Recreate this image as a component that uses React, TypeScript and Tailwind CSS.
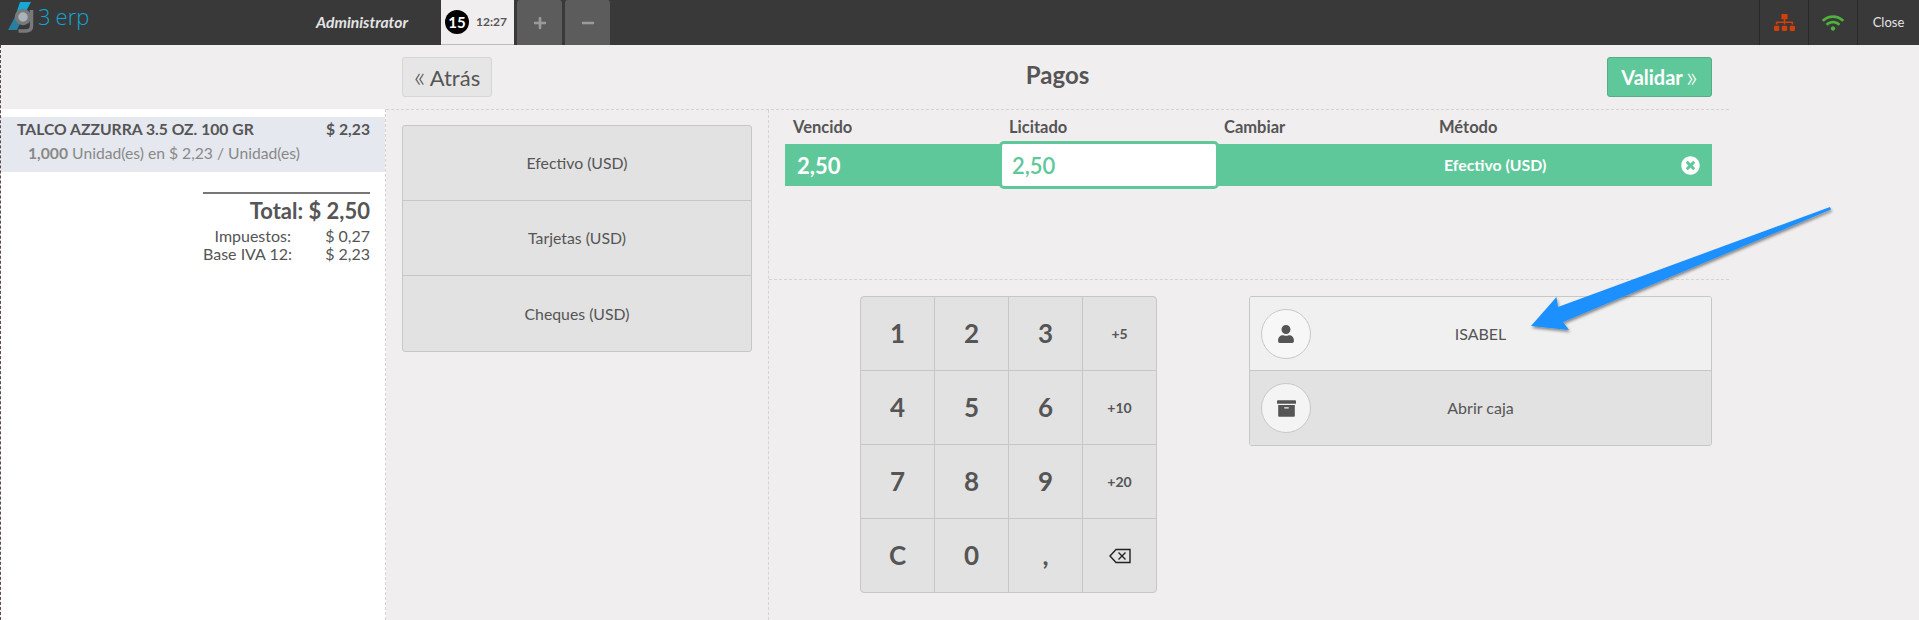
import { FaArchive, FaMinus, FaPlus, FaSitemap, FaTimesCircle, FaUser, FaWifi } from 'react-icons/fa'

const keys = ['1', '2', '3', '+5', '4', '5', '6', '+10', '7', '8', '9', '+20', 'C', '0', ',', 'back']
const methods = ['Efectivo (USD)', 'Tarjetas (USD)', 'Cheques (USD)']

function Logo() {
  return (
    <div className="flex h-[45px] w-[94px] items-start pl-[8px] pt-[1px]">
      <svg width="30" height="32" viewBox="0 0 30 32" className="shrink-0">
        <polygon points="0,29 7,16 15,16 9,29" fill="#2b7f9e" />
        <polygon points="12,1 23,1 15,16 7,16" fill="#14a9d8" />
        <circle cx="15" cy="16" r="6.5" fill="#a9b4ba" stroke="#77797b" strokeWidth="3.5" />
        <path d="M23.5 9v16c0 4-3 5-6 5h-7" fill="none" stroke="#77797b" strokeWidth="3.5" />
      </svg>
      <span className="mt-[3px] whitespace-nowrap font-['Open_Sans',sans-serif] text-[22px] leading-[24px] font-light text-[#12a5d5]">3<span className="ml-[5px]">erp</span></span>
    </div>
  )
}

function App() {
  return (
    <div className="relative flex h-[620px] w-[1919px] flex-col overflow-hidden bg-[#f0eeef] font-['Lato','Noto_Sans',sans-serif] text-[#555555]">
      {/* Top bar */}
      <header className="flex h-[45px] shrink-0 items-stretch bg-[#393939]">
        <Logo />
        <div className="ml-[222px] flex w-[125px] items-center text-[15.7px] font-bold italic text-[#e4e4e4]">Administrator</div>
        <div className="flex w-[73px] items-center gap-[7px] border-b border-[#bdbdbd] bg-[#f0eeef] pl-[4px]">
          <span className="flex h-[24px] w-[24px] items-center justify-center rounded-full bg-black text-[15px] font-bold text-white">15</span>
          <span className="text-[12px] font-bold text-[#555555]">12:27</span>
        </div>
        <div className="ml-[3px] flex w-[45px] items-center justify-center rounded-t-[3px] bg-[#5c5c5c] text-[#9a9a9a]"><FaPlus className="h-[14px] w-[14px]" /></div>
        <div className="ml-[3px] flex w-[45px] items-center justify-center rounded-t-[3px] bg-[#5c5c5c] text-[#9a9a9a]"><FaMinus className="h-[14px] w-[14px]" /></div>
        <div className="ml-auto flex items-stretch">
          <div className="flex w-[49px] items-center justify-center border-l border-[#292929]"><FaSitemap className="h-[21px] w-[21px] text-[#d23f0a]" /></div>
          <div className="flex w-[49px] items-center justify-center border-l border-[#292929]"><FaWifi className="h-[22px] w-[22px] text-[#4eb23c]" /></div>
          <div className="flex w-[62px] items-center justify-center border-l border-[#292929] text-[13px] text-[#e4e4e4]">Close</div>
        </div>
      </header>

      <div className="flex min-h-0 flex-1 border-l border-dashed border-l-[#5a4a4a]">
        {/* Order column */}
        <aside className="flex w-[385px] shrink-0 flex-col">
          <div className="h-[64px] shrink-0" />
          <div className="flex-1 border-r border-dashed border-[#d4d4d4] bg-white pt-[8px]">
            <div className="h-[55px] bg-[#e6e8ef] pt-[2px] pl-[16px] pr-[15px] text-[15.7px] leading-[20px]">
              <div className="flex justify-between font-bold"><span>TALCO AZZURRA 3.5 OZ. 100 GR</span><span>$ 2,23</span></div>
              <div className="mt-[4px] pl-[11px] text-[#888888]"><b>1,000</b> Unidad(es) en $ 2,23 / Unidad(es)</div>
            </div>
            <div className="mt-[20px] ml-[202px] mr-[15px] border-t-2 border-[#777777] pt-[1px] text-right">
              <div className="text-[22px] leading-[32px] font-bold">Total: $ 2,50</div>
              <div className="flex text-[16px] leading-[18px]"><span className="w-[88px] whitespace-nowrap">Impuestos:</span><span className="flex-1">$ 0,27</span></div>
              <div className="flex text-[16px] leading-[18px]"><span className="w-[88px] whitespace-nowrap">Base IVA 12:</span><span className="flex-1">$ 2,23</span></div>
            </div>
          </div>
        </aside>

        <div className="flex w-[1343px] shrink-0 flex-col">
          {/* Title row */}
          <div className="flex h-[65px] shrink-0 items-start border-b border-dashed border-[#d4d4d4] pt-[12px] pl-[16px] pr-[17px]">
            <button className="flex h-[40px] w-[90px] items-center justify-center gap-[4px] rounded-[3px] border border-[#d6d6d6] bg-[#e6e6e6] text-[22px]"><span className="-mt-[4px] text-[30px] leading-none font-light">«</span>Atrás</button>
            <h1 className="flex-1 pt-[4px] pl-[16px] text-center text-[24px] leading-[28px] font-bold">Pagos</h1>
            <button className="flex h-[40px] w-[105px] items-center justify-center gap-[3px] rounded-[3px] border border-[#54ad87] bg-[#5fc89b] text-[20px] font-bold text-white">Validar<span className="-mt-[4px] text-[30px] leading-none font-light">»</span></button>
          </div>

          <div className="flex min-h-0 flex-1">
            {/* Payment methods */}
            <div className="w-[383px] shrink-0 border-r border-dashed border-[#d4d4d4] pt-[15px] pl-[16px]">
              <div className="w-[350px] divide-y divide-[#c7c7c7] overflow-hidden rounded-[3px] border border-[#c7c7c7] bg-[#e2e2e2]">
                {methods.map((m) => (
                  <div key={m} className="flex h-[75px] items-center justify-center text-[15.8px]">{m}</div>
                ))}
              </div>
            </div>

            <div className="flex flex-1 flex-col">
              {/* Paymentlines */}
              <div className="h-[170px] shrink-0 border-b border-dashed border-[#d4d4d4] pl-[16px]">
                <div className="flex h-[34px] items-center pl-[8px] text-[16.5px] font-bold">
                  <span className="w-[216px]">Vencido</span>
                  <span className="w-[215px]">Licitado</span>
                  <span className="w-[215px]">Cambiar</span>
                  <span>Método</span>
                </div>
                <div className="flex h-[42px] w-[927px] items-center bg-[#5fc89b] font-bold text-white">
                  <span className="w-[214px] pl-[12px] text-[22px]">2,50</span>
                  <div className="flex h-[48px] w-[220px] shrink-0 items-center rounded-[5px] border-[3px] border-[#5fc89b] bg-white pl-[10px] text-[22px] font-semibold text-[#5fc89b]">2,50</div>
                  <span className="w-[225px]" />
                  <span className="text-[15.8px]">Efectivo (USD)</span>
                  <FaTimesCircle className="ml-auto mr-[12px] h-[19px] w-[19px]" />
                </div>
              </div>

              <div className="flex flex-1 items-start pt-[16px]">
                {/* Numpad */}
                <div className="ml-[91px] grid w-[297px] grid-cols-[74px_74px_74px_73px] overflow-hidden rounded-[4px] border border-[#c7c7c7] bg-[#e2e2e2]">
                  {keys.map((k, i) => (
                    <div
                      key={k}
                      className={`flex items-center justify-center font-bold ${i % 4 !== 3 ? 'border-r border-[#c7c7c7]' : ''} ${i < 12 ? 'h-[74px] border-b border-[#c7c7c7]' : 'h-[73px]'} ${k.startsWith('+') ? 'text-[14px]' : 'text-[26px]'}`}
                    >
                      {k === 'back' ? (
                        <svg width="22" height="16" viewBox="0 0 22 16" fill="none" stroke="#222222" strokeWidth="1.4">
                          <path d="M7 1.5h14v13H7L1 8z" />
                          <path d="M9.5 4.5l7 7M16.5 4.5l-7 7" />
                        </svg>
                      ) : k}
                    </div>
                  ))}
                </div>

                {/* Customer / cashdrawer */}
                <div className="ml-[92px] w-[463px] overflow-hidden rounded-[3px] border border-[#c7c7c7]">
                  <div className="relative flex h-[74px] items-center justify-center border-b border-[#c7c7c7] bg-[#f0f0f0] text-[16px]">
                    <span className="absolute left-[11px] flex h-[50px] w-[50px] items-center justify-center rounded-full border border-[#c7c7c7] bg-[#f7f7f7]"><FaUser className="h-[18px] w-[18px]" /></span>
                    ISABEL
                  </div>
                  <div className="relative flex h-[74px] items-center justify-center bg-[#e2e2e2] text-[16px]">
                    <span className="absolute left-[11px] flex h-[50px] w-[50px] items-center justify-center rounded-full border border-[#c7c7c7] bg-[#f4f4f4]"><FaArchive className="h-[19px] w-[19px]" /></span>
                    Abrir caja
                  </div>
                </div>
              </div>
            </div>
          </div>
        </div>
      </div>

      {/* Annotation arrow */}
      <svg className="pointer-events-none absolute left-[1520px] top-[200px]" width="320" height="140" viewBox="1520 200 320 140">
        <defs>
          <filter id="arrowShadow" x="-10%" y="-10%" width="120%" height="130%">
            <feDropShadow dx="1" dy="2" stdDeviation="1.5" floodColor="#000000" floodOpacity="0.45" />
          </filter>
        </defs>
        <path d="M1830 207 L1831 209.5 L1563 322 L1569 330 L1531 326 L1556.5 297 L1558 307 Z" fill="#1a90ff" filter="url(#arrowShadow)" />
      </svg>
    </div>
  )
}

export default App
